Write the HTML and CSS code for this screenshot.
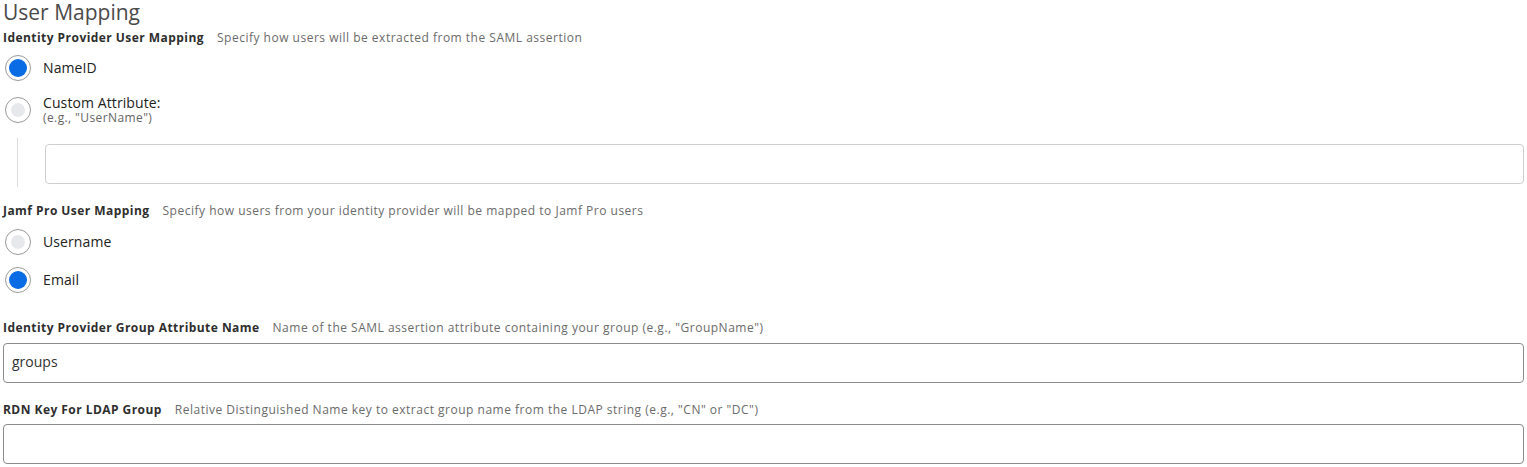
FILE: index.html
```html
<!DOCTYPE html>
<html>
<head>
<meta charset="utf-8">
<link rel="stylesheet" href="styles.css">
</head>
<body>
<div class="page">
  <h1 class="title">User Mapping</h1>

  <div class="field-label label-first"><span class="lbl">Identity Provider User Mapping</span><span class="desc">Specify how users will be extracted from the SAML assertion</span></div>
  <div class="radio-row r1"><span class="radio checked"></span><span class="rtext">NameID</span></div>
  <div class="radio-row r2"><span class="radio"></span><span class="rtext-block"><span class="rtext">Custom Attribute:</span><span class="hint">(e.g., "UserName")</span></span></div>
  <div class="indent">
    <div class="input light"></div>
  </div>

  <div class="field-label label-jamf"><span class="lbl">Jamf Pro User Mapping</span><span class="desc">Specify how users from your identity provider will be mapped to Jamf Pro users</span></div>
  <div class="radio-row r3"><span class="radio"></span><span class="rtext">Username</span></div>
  <div class="radio-row r4"><span class="radio checked"></span><span class="rtext">Email</span></div>

  <div class="field-label label-group"><span class="lbl">Identity Provider Group Attribute Name</span><span class="desc">Name of the SAML assertion attribute containing your group (e.g., "GroupName")</span></div>
  <div class="input dark i-group"><span class="val">groups</span></div>

  <div class="field-label label-rdn"><span class="lbl">RDN Key For LDAP Group</span><span class="desc">Relative Distinguished Name key to extract group name from the LDAP string (e.g., "CN" or "DC")</span></div>
  <div class="input dark i-rdn"></div>
</div>
</body>
</html>
```

FILE: styles.css
```css
* { box-sizing: border-box; }
html, body { margin: 0; padding: 0; background: #fff; }
body { font-family: "Open Sans", "Liberation Sans", sans-serif; color: #333; }
.page { padding: 0 3px; display: flex; flex-direction: column; }
.title { margin: 0; font-size: 21px; line-height: 24px; font-weight: 400; color: #4a4a4a; }
.field-label { display: flex; align-items: center; height: 16px; font-size: 12px; line-height: 16px; }
.lbl { font-weight: 700; color: #2e2e2e; margin-right: 13px; letter-spacing: 0.45px; }
.desc { color: #6b6b6b; letter-spacing: 0.5px; }
.label-first { margin-top: 6px; }
.radio-row { display: flex; align-items: center; }
.radio { width: 26px; height: 26px; border: 1px solid #9a9a9a; border-radius: 50%; margin-left: 2px; display: flex; align-items: center; justify-content: center; flex: none; }
.radio::after { content: ""; width: 14px; height: 14px; border-radius: 50%; background: #e6e8ec; }
.radio.checked::after { width: 18px; height: 18px; background: #0a6ce4; }
.rtext { font-size: 14px; color: #222; margin-left: 12px; line-height: 16px; letter-spacing: 0.1px; }
.rtext-block { display: flex; flex-direction: column; margin-left: 12px; }
.rtext-block .rtext { margin-left: 0; }
.hint { font-size: 12px; color: #666; line-height: 14px; letter-spacing: 0.4px; }
.r1 { margin-top: 9px; }
.r2 { margin-top: 14px; }
.indent { margin-top: 13px; margin-left: 14px; border-left: 1px solid #dcdcdc; padding: 6px 0 3px 27px; }
.input { height: 40px; border-radius: 4px; background: #fff; display: flex; align-items: center; padding-left: 8px; }
.input.light { border: 1px solid #cfcfcf; }
.input.dark { border: 1px solid #8c8c8c; }
.val { font-size: 14px; color: #333; line-height: 16px; margin-top: -2px; }
.label-jamf { margin-top: 16px; }
.r3 { margin-top: 10px; }
.r4 { margin-top: 12px; }
.label-group { margin-top: 27px; }
.i-group { margin-top: 7px; }
.label-rdn { margin-top: 19px; }
.i-rdn { margin-top: 6px; }
```
